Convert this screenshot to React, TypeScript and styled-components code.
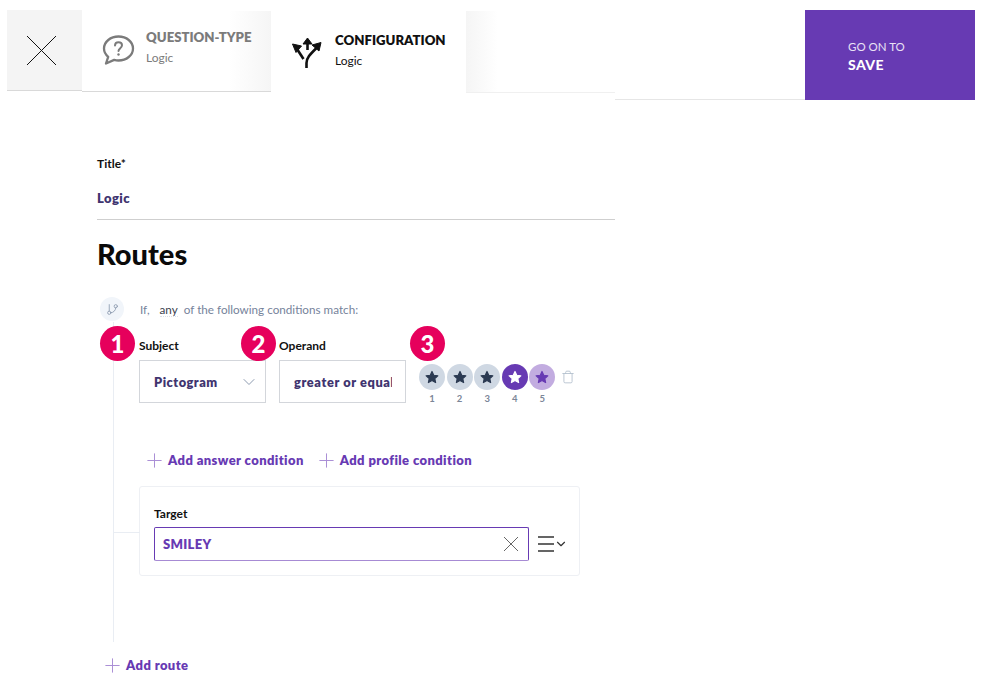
import React from "react";
import styled, { createGlobalStyle } from "styled-components";
import { ChevronDown, GitBranch, Plus, Trash } from "lucide-react";

const Global = createGlobalStyle`
  html, body {
    margin: 0;
    background: #fff;
    font-family: Lato, "Open Sans", sans-serif;
  }
`;

const Page = styled.div`
  width: 982px;
  height: 694px;
  overflow: hidden;
  padding-top: 10px;
  box-sizing: border-box;
`;

const Header = styled.header`
  display: flex;
  height: 90px;
  margin-left: 7px;
  width: 968px;
`;

const CloseBox = styled.button`
  width: 75px;
  height: 81px;
  padding: 0 7px 0 0;
  border: 0;
  border-bottom: 1px solid #d9d9d9;
  background: #f4f4f4;
  color: #111;
  display: flex;
  align-items: center;
  justify-content: center;
`;

const Tab = styled.div<{ $active?: boolean; $width: number }>`
  width: ${p => p.$width}px;
  height: ${p => (p.$active ? 82 : 81)}px;
  margin-top: ${p => (p.$active ? 3 : 1)}px;
  margin-bottom: auto;
  box-sizing: border-box;
  display: flex;
  align-items: flex-start;
  background: ${p => (p.$active ? "#fff" : "linear-gradient(90deg, #fff 78%, #f5f5f5 100%)")};
  border-bottom: ${p => (p.$active ? "0" : "1px solid #d9d9d9")};
  color: ${p => (p.$active ? "#111" : "#7b7b7b")};
  padding: ${p => (p.$active ? "19px 0 0 20px" : "18px 0 0 20px")};
`;

const TabIcon = styled.svg<{ $active?: boolean }>`
  width: 33px;
  height: 33px;
  margin-top: ${p => (p.$active ? 4 : 5)}px;
  flex: none;
`;

const TabText = styled.div`
  margin-left: 11px;
  display: flex;
  flex-direction: column;
  gap: 6px;
`;

const TabTitle = styled.span`
  font-size: 13.2px;
  line-height: 16px;
  font-weight: 800;
  white-space: nowrap;
`;

const TabSub = styled.span`
  font-size: 12px;
  line-height: 14px;
`;

const TabRest = styled.div`
  width: 149px;
  height: 81px;
  margin-top: 1px;
  background: linear-gradient(90deg, #f5f5f5 0, #fff 32px);
  border-bottom: 1px solid #f0f0f0;
`;

const Spacer = styled.div`
  flex: 1;
  border-bottom: 1px solid #e6e6e6;
`;

const SaveButton = styled.button`
  width: 170px;
  height: 90px;
  border: 0;
  margin: 0;
  padding: 4px 0 0 43px;
  background: #673ab3;
  color: #fff;
  display: flex;
  flex-direction: column;
  align-items: flex-start;
  justify-content: center;
  gap: 2px;
  font-family: inherit;
`;

const SaveSmall = styled.span`
  font-size: 11.5px;
  line-height: 14px;
  color: #e9e1f5;
`;

const SaveBig = styled.span`
  font-size: 14px;
  line-height: 18px;
  font-weight: 900;
  letter-spacing: 0.4px;
`;

const Content = styled.main`
  width: 518px;
  margin-left: 97px;
  padding-top: 57px;
`;

const Label = styled.div`
  font-size: 12px;
  line-height: 14px;
  font-weight: 700;
  color: #111;
`;

const TitleValue = styled.div`
  margin-top: 19px;
  padding-bottom: 13px;
  font-size: 13px;
  line-height: 16px;
  font-weight: 800;
  letter-spacing: 0.4px;
  color: #40346f;
  border-bottom: 1px solid #cfcfcf;
`;

const Heading = styled.h1`
  margin: 16px 0 0;
  font-size: 29px;
  line-height: 36px;
  font-weight: 900;
  color: #0a0a0a;
`;

const RouteIntro = styled.div`
  display: flex;
  align-items: center;
  margin: 24px 0 0 3px;
  height: 26px;
  font-size: 11.7px;
  color: #76839b;
`;

const BranchDot = styled.span`
  width: 24px;
  height: 24px;
  border-radius: 50%;
  background: #f1f5fa;
  color: #8d9bb0;
  display: flex;
  align-items: center;
  justify-content: center;
  margin-right: 16px;
`;

const AnyWord = styled.span`
  margin: 0 6px 0 10px;
  color: #3a3f4d;
  border-bottom: 1px dotted #dde1e8;
`;

const RouteBody = styled.section`
  margin-left: 16px;
  width: 467px;
  height: 320px;
  box-sizing: border-box;
  padding: 17px 0 0 25px;
  border-left: 1px solid #e9edf3;
`;

const ConditionRow = styled.div`
  display: flex;
  align-items: flex-start;
  gap: 13px;
`;

const Field = styled.div`
  position: relative;
  width: 127px;
`;

const Badge = styled.span<{ $left: number }>`
  position: absolute;
  left: ${p => p.$left}px;
  top: -13px;
  width: 35px;
  height: 35px;
  border-radius: 50%;
  background: #e6005c;
  color: #fff;
  font-size: 24px;
  font-weight: 900;
  display: flex;
  align-items: center;
  justify-content: center;
`;

const SelectBox = styled.div`
  margin-top: 7px;
  height: 43px;
  box-sizing: border-box;
  border: 1px solid #d3d6db;
  padding: 0 6px 0 14px;
  display: flex;
  align-items: center;
  justify-content: space-between;
  white-space: nowrap;
  font-size: 12.8px;
  font-weight: 800;
  letter-spacing: 0.5px;
  color: #40346f;
`;

const ClippedValue = styled.span`
  width: 98px;
  overflow: hidden;
  letter-spacing: 0.6px;
`;

const StarsBlock = styled.div`
  position: relative;
  display: flex;
  align-items: flex-start;
  padding-top: 25px;
`;

const StarCol = styled.div`
  width: 27.6px;
  display: flex;
  flex-direction: column;
  align-items: flex-start;
`;

const StarCircle = styled.span<{ $kind: "off" | "on" | "soft" }>`
  width: 26px;
  height: 26px;
  border-radius: 50%;
  display: flex;
  align-items: center;
  justify-content: center;
  background: ${p => ({ off: "#cfd8e3", on: "#673ab3", soft: "#c2ace0" })[p.$kind]};
  color: ${p => ({ off: "#2b3a52", on: "#fff", soft: "#673ab3" })[p.$kind]};
`;

const StarNum = styled.span`
  width: 26px;
  text-align: center;
  margin-top: 3px;
  font-size: 9.5px;
  line-height: 12px;
  font-weight: 700;
  color: #7c8698;
`;

const TrashButton = styled.span`
  margin: 6px 0 0 4px;
  color: #b4c0ce;
  display: flex;
`;

const ActionRow = styled.div`
  display: flex;
  gap: 11px;
  margin: 45px 0 0 4px;
`;

const ActionLink = styled.a`
  display: flex;
  align-items: center;
  gap: 2px;
  height: 20px;
  font-size: 13px;
  font-weight: 800;
  letter-spacing: 0.4px;
  color: #673ab3;
  white-space: nowrap;

  svg {
    color: #a78bd4;
  }
`;

const TargetCard = styled.div`
  position: relative;
  margin-top: 16px;
  width: 441px;
  height: 90px;
  box-sizing: border-box;
  border: 1px solid #eef0f4;
  border-radius: 3px;
  padding: 20px 14px 0;

  &::before {
    content: "";
    position: absolute;
    left: -26px;
    top: 45px;
    width: 26px;
    height: 1px;
    background: #e9edf3;
  }
`;

const TargetRow = styled.div`
  display: flex;
  align-items: center;
  margin-top: 6px;
`;

const TargetInput = styled.div`
  flex: none;
  width: 375px;
  height: 34px;
  box-sizing: border-box;
  border: 1px solid #673ab3;
  border-bottom-color: #a78bd4;
  border-radius: 2px;
  padding: 0 10px 0 8px;
  display: flex;
  align-items: center;
  justify-content: space-between;
  font-size: 13px;
  font-weight: 800;
  letter-spacing: 0.3px;
  color: #673ab3;

  svg {
    color: #666;
  }
`;

const MenuToggle = styled.span`
  flex: none;
  margin-left: 9px;
  display: flex;
  align-items: center;
  color: #333;
`;

const AddRoute = styled(ActionLink)`
  margin: 13px 0 0 4px;
`;

const stars: Array<"off" | "on" | "soft"> = ["off", "off", "off", "on", "soft"];

const Star = () => (
  <svg width="14" height="14" viewBox="0 0 24 24" fill="currentColor" stroke="currentColor" strokeWidth="2" strokeLinejoin="round">
    <polygon points="12 2.5 15 9 22 9.8 16.8 14.6 18.2 21.5 12 18 5.8 21.5 7.2 14.6 2 9.8 9 9" />
  </svg>
);

const ThinCross = ({ size }: { size: number }) => (
  <svg width={size} height={size} viewBox="0 0 14 14" fill="none" stroke="currentColor" strokeWidth={14 / size}>
    <path d="M0 0 14 14M14 0 0 14" />
  </svg>
);

const App: React.FC = () => {
  return (
    <Page>
      <Global />
      <Header>
        <CloseBox>
          <ThinCross size={29} />
        </CloseBox>
        <Tab $width={189}>
          <TabIcon viewBox="0 0 33 33" fill="none" stroke="currentColor">
            <path d="M16.5 2.5c8 0 14.5 5.3 14.5 12s-6.500 12-14.500 12c-1.500 0-3-.2-4.300-.6L4 29.500l2.200-6.700C3.600 20.600 2 17.700 2 14.500c0-6.700 6.500-12 14.500-12z" strokeWidth="2.300" strokeLinejoin="round" />
            <path d="M13 11.500c0-2 1.500-3.300 3.500-3.300s3.500 1.300 3.500 3.100c0 2.800-3.500 2.900-3.500 5.800" strokeWidth="2" strokeLinecap="round" />
            <circle cx="16.500" cy="20.500" r="1.200" fill="currentColor" stroke="none" />
          </TabIcon>
          <TabText>
            <TabTitle>QUESTION-TYPE</TabTitle>
            <TabSub>Logic</TabSub>
          </TabText>
        </Tab>
        <Tab $active $width={195}>
          <TabIcon $active viewBox="0 0 33 33" fill="none" stroke="currentColor" strokeWidth="2.600">
            <path d="M16.500 14V4" />
            <path d="M12 8 16.500 2l4.500 6z" fill="currentColor" strokeWidth="1" strokeLinejoin="round" />
            <path d="M15.500 32v-5c0-5 3-8 10-15" />
            <path d="M21 9 30 6.500 28 15z" fill="currentColor" strokeWidth="1" strokeLinejoin="round" />
            <path d="M12.500 23 6 13" />
            <path d="M1.500 8 10.500 10 5 16.500z" fill="currentColor" strokeWidth="1" strokeLinejoin="round" />
          </TabIcon>
          <TabText>
            <TabTitle>CONFIGURATION</TabTitle>
            <TabSub>Logic</TabSub>
          </TabText>
        </Tab>
        <TabRest />
        <Spacer />
        <SaveButton>
          <SaveSmall>GO ON TO</SaveSmall>
          <SaveBig>SAVE</SaveBig>
        </SaveButton>
      </Header>
      <Content>
        <Label>Title*</Label>
        <TitleValue>Logic</TitleValue>
        <Heading>Routes</Heading>
        <RouteIntro>
          <BranchDot>
            <GitBranch size={13} strokeWidth={1.6} />
          </BranchDot>
          If,
          <AnyWord>any</AnyWord>
          of the following conditions match:
        </RouteIntro>
        <RouteBody>
          <ConditionRow>
            <Field>
              <Badge $left={-39}>1</Badge>
              <Label>Subject</Label>
              <SelectBox>
                Pictogram
                <ChevronDown size={20} strokeWidth={1.2} color="#8d9bb0" />
              </SelectBox>
            </Field>
            <Field>
              <Badge $left={-38}>2</Badge>
              <Label>Operand</Label>
              <SelectBox>
                <ClippedValue>greater or equal</ClippedValue>
              </SelectBox>
            </Field>
            <StarsBlock>
              <Badge $left={-9}>3</Badge>
              {stars.map((kind, i) => (
                <StarCol key={i}>
                  <StarCircle $kind={kind}>
                    <Star />
                  </StarCircle>
                  <StarNum>{i + 1}</StarNum>
                </StarCol>
              ))}
              <TrashButton>
                <Trash size={14} strokeWidth={1.5} />
              </TrashButton>
            </StarsBlock>
          </ConditionRow>
          <ActionRow>
            <ActionLink>
              <Plus size={23} strokeWidth={1} />
              Add answer condition
            </ActionLink>
            <ActionLink>
              <Plus size={23} strokeWidth={1} />
              Add profile condition
            </ActionLink>
          </ActionRow>
          <TargetCard>
            <Label>Target</Label>
            <TargetRow>
              <TargetInput>
                SMILEY
                <ThinCross size={14} />
              </TargetInput>
              <MenuToggle>
                <svg width="16" height="16" viewBox="0 0 16 16" stroke="currentColor" strokeWidth="1.300">
                  <path d="M0 1h16M0 8h16M0 15h16" />
                </svg>
                <ChevronDown size={14} strokeWidth={2} />
              </MenuToggle>
            </TargetRow>
          </TargetCard>
        </RouteBody>
        <AddRoute>
          <Plus size={23} strokeWidth={1} />
          Add route
        </AddRoute>
      </Content>
    </Page>
  );
};

export default App;
